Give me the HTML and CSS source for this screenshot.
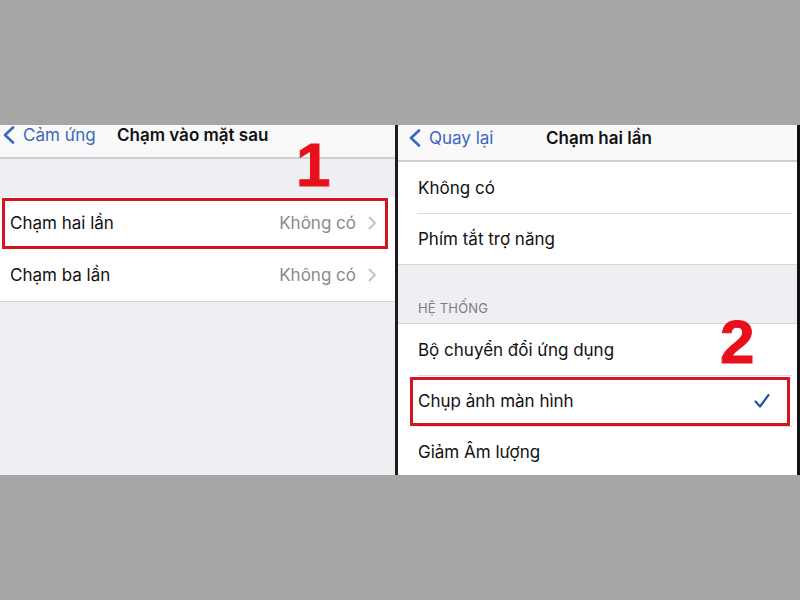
FILE: index.html
```html
<!DOCTYPE html>
<html lang="vi">
<head>
    <meta charset="UTF-8">
    <meta name="viewport" content="width=device-width, initial-scale=1.0">
    <title>Chạm vào mặt sau</title>
    <link rel="stylesheet" href="styles.css">
</head>
<body>

    <div class="strip">
        <!-- Màn hình 1: Chạm vào mặt sau -->
        <section class="screen screen-left">
            <div class="navbar">
                <span class="back">
                    <svg class="back-icon" width="13" height="18" viewBox="0 0 13 18"><path d="M11 1.5 L3 9 L11 16.5" fill="none" stroke="currentColor" stroke-width="2.6" stroke-linecap="round" stroke-linejoin="round"/></svg>
                    Cảm ứng
                </span>
                <span class="title">Chạm vào mặt sau</span>
            </div>
            <div class="spacer"></div>
            <div class="group">
                <div class="row">
                    <span class="label">Chạm hai lần</span>
                    <span class="value">Không có</span>
                    <svg class="chevron" width="9" height="14" viewBox="0 0 9 14"><path d="M1.5 1.5 L7 7 L1.5 12.5" fill="none" stroke="currentColor" stroke-width="1.8" stroke-linecap="round" stroke-linejoin="round"/></svg>
                </div>
                <div class="row">
                    <span class="label">Chạm ba lần</span>
                    <span class="value">Không có</span>
                    <svg class="chevron" width="9" height="14" viewBox="0 0 9 14"><path d="M1.5 1.5 L7 7 L1.5 12.5" fill="none" stroke="currentColor" stroke-width="1.8" stroke-linecap="round" stroke-linejoin="round"/></svg>
                </div>
            </div>

            <div class="mark mark-box box-1"></div>
            <div class="mark step step-1">1</div>
        </section>

        <div class="divider"></div>

        <!-- Màn hình 2: Chạm hai lần -->
        <section class="screen screen-right">
            <div class="navbar">
                <span class="back">
                    <svg class="back-icon" width="13" height="18" viewBox="0 0 13 18"><path d="M11 1.5 L3 9 L11 16.5" fill="none" stroke="currentColor" stroke-width="2.6" stroke-linecap="round" stroke-linejoin="round"/></svg>
                    Quay lại
                </span>
                <span class="title">Chạm hai lần</span>
            </div>
            <div class="group">
                <div class="row"><span class="label">Không có</span></div>
                <div class="row"><span class="label">Phím tắt trợ năng</span></div>
            </div>
            <div class="section-head">HỆ THỐNG</div>
            <div class="group group-open">
                <div class="row"><span class="label">Bộ chuyển đổi ứng dụng</span></div>
                <div class="row">
                    <span class="label">Chụp ảnh màn hình</span>
                    <svg class="check" width="16" height="16" viewBox="0 0 16 16"><path d="M1.5 8.5 L6 13.5 L14.5 2" fill="none" stroke="currentColor" stroke-width="2.2" stroke-linecap="round" stroke-linejoin="round"/></svg>
                </div>
                <div class="row"><span class="label">Giảm Âm lượng</span></div>
            </div>

            <div class="mark mark-box box-2"></div>
            <div class="mark step step-2">2</div>
        </section>

        <div class="edge"></div>
    </div>

</body>
</html>
```

FILE: styles.css
```css
body {
    margin: 0;
    padding: 125px 0;
    background: #a6a6a6;
    font-family: 'Inter', 'Noto Sans', sans-serif;
    color: #111;
}

.strip {
    display: flex;
    height: 350px;
    overflow: hidden;
}

.screen {
    position: relative;
    display: flex;
    flex-direction: column;
    background: #efeff3;
    overflow: hidden;
}

.screen > * {
    flex-shrink: 0;
}

.screen-left {
    width: 395px;
}

.screen-right {
    width: 399px;
}

.divider {
    width: 3px;
    background: #1c1c1c;
}

.edge {
    width: 3px;
    background: #111;
}

/* thanh điều hướng */
.navbar {
    display: flex;
    align-items: flex-start;
    box-sizing: border-box;
    height: 34px;
    background: #f9f9fa;
    border-bottom: 2px solid #cfcfd2;
    font-size: 17px;
    line-height: 20px;
}

.screen-right .navbar {
    height: 37px;
    padding-top: 3px;
}

.back {
    display: flex;
    align-items: center;
    gap: 8px;
    color: #3a67bf;
}

.back-icon {
    color: #3a67bf;
}

.screen-left .back {
    padding-left: 2px;
    width: 115px;
}

.screen-right .back {
    padding-left: 10px;
    width: 138px;
}

.title {
    font-weight: 600;
    color: #111;
}

.spacer {
    height: 38px;
}

/* danh sách */
.group {
    background: #fff;
    border-bottom: 1px solid #d6d6da;
}

.group-open {
    border-top: 1px solid #d6d6da;
    border-bottom: none;
    flex: 1 0 auto;
}

.row {
    display: flex;
    align-items: center;
    box-sizing: border-box;
    height: 51px;
    font-size: 17px;
    position: relative;
}

.screen-left .row {
    height: 52px;
    padding: 0 18px 0 10px;
}

.screen-right .row {
    padding: 0 20px 0 20px;
}

.screen-right .row + .row {
    border-top: 1px solid #dcdcdf;
    margin-left: 19px;
    padding-left: 1px;
    margin-right: 5px;
}

.label {
    flex: 1;
}

.value {
    color: #8a8a8e;
    margin-right: 12px;
}

.chevron {
    color: #c2c2c6;
}

.check {
    color: #2c53a8;
    margin-right: 2px;
}

.section-head {
    height: 58px;
    box-sizing: border-box;
    padding: 35px 0 0 20px;
    font-size: 13px;
    color: #7c7c80;
    letter-spacing: 0.2px;
}

/* chú thích đỏ */
.mark-box {
    position: absolute;
    border: 3px solid #d3131d;
}

.box-1 {
    left: 2px;
    top: 73px;
    width: 380px;
    height: 45px;
}

.box-2 {
    left: 12px;
    top: 252px;
    width: 374px;
    height: 43px;
}

.step {
    position: absolute;
    font-family: 'Liberation Sans', Arial, sans-serif;
    font-weight: bold;
    font-size: 62px;
    line-height: 62px;
    color: #e8101a;
    -webkit-text-stroke: 1px #e8101a;
}

.step-1 {
    left: 296px;
    top: 9px;
}

.step-2 {
    left: 322px;
    top: 186px;
}
```
